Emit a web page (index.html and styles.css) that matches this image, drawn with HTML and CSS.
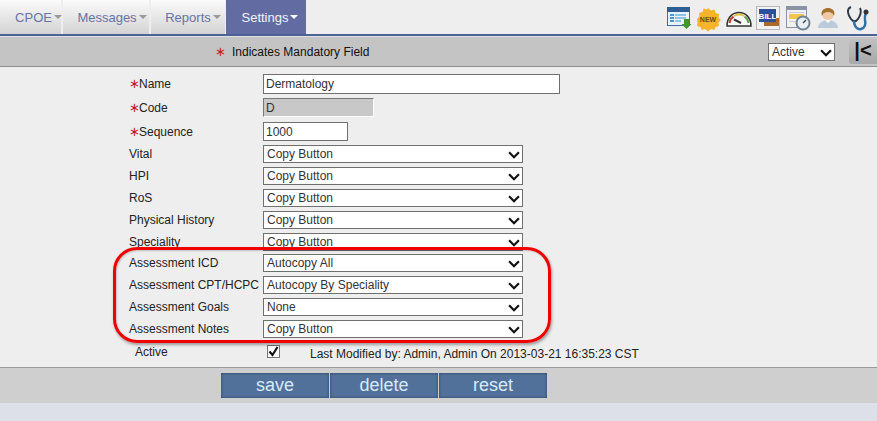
FILE: index.html
```html
<!DOCTYPE html>
<html>
<head>
<title>Settings - Speciality</title>
<meta http-equiv="Content-Type" content="text/html; charset=UTF-8" />
<link rel="stylesheet" href="styles.css">
</head>

<body>

<div class="nav">
  <ul class="menu">
    <li class="m-cpoe"><a>CPOE<span class="caret"></span></a></li>
    <li class="m-messages"><a>Messages<span class="caret"></span></a></li>
    <li class="m-reports"><a>Reports<span class="caret"></span></a></li>
    <li class="m-settings"><a>Settings<span class="caret"></span></a></li>
  </ul>
  <div class="tools">
    <svg width="30" height="30" viewBox="0 0 30 30">
      <rect x="4.500" y="4.500" width="22" height="18" fill="#eaf3fb" stroke="#3b6ea5"/>
      <rect x="4" y="4" width="23" height="5" fill="#2c5f95"/>
      <path d="M7 12h4M7 15h4M7 18h4" stroke="#3f9be0" stroke-width="2"/>
      <path d="M12 12h11M12 15h11M12 18h6" stroke="#8fc3ea" stroke-width="2"/>
      <path d="M21 16h5v5h2.500l-5 5-5-5H21z" fill="#3f9a2c"/>
    </svg>
    <svg width="30" height="30" viewBox="0 0 30 30">
      <path d="M15 5l3 2.500 3.500-1 1 3.500 3.500 1-.5 3.500 2.500 2.500-2.500 2.500.5 3.500-3.500 1-1 3-3.500-1-3 2.500-3-2.500-3.500 1-1-3-3.500-1 .5-3.500L4 16l2.500-2.500L6 10l3.500-1 1-3.500 3.500 1z" fill="#f7b32b"/>
      <text x="15" y="19" class="new">NEW</text>
    </svg>
    <svg width="30" height="30" viewBox="0 0 30 30">
      <path d="M4 23c0-18 24-18 24 0z" fill="#f8f8f8" stroke="#333" stroke-width="1.500"/>
      <path d="M6.500 20a10 10 0 0 1 4-6.500" fill="none" stroke="#cc3a2a" stroke-width="2"/>
      <path d="M11 13a10 10 0 0 1 10 0" fill="none" stroke="#e5c13a" stroke-width="2"/>
      <path d="M21.500 13.500a10 10 0 0 1 4 6.500" fill="none" stroke="#5aa04a" stroke-width="2"/>
      <path d="M11 16.500l7 3.500" stroke="#333" stroke-width="2"/>
    </svg>
    <svg width="30" height="30" viewBox="0 0 30 30">
      <rect x="3.500" y="3.500" width="23" height="23" fill="#f2f2f2" stroke="#b9b9b9"/>
      <rect x="11" y="15" width="15" height="8" fill="#a86a2c"/>
      <rect x="6" y="6" width="17" height="13" fill="#2c4f9a"/>
      <text x="14.500" y="16" class="bill">BILL</text>
    </svg>
    <svg width="30" height="30" viewBox="0 0 30 30">
      <rect x="3.500" y="3.500" width="20" height="21" fill="#f1f1ee" stroke="#8a93a5"/>
      <rect x="3" y="3" width="21" height="4" fill="#8a93a5"/>
      <rect x="6" y="11" width="15" height="5" fill="#f2c84b"/>
      <path d="M6 9.500h15M6 18.500h10" stroke="#ccd" stroke-width="1"/>
      <circle cx="20" cy="20" r="6.500" fill="#e9eef2" stroke="#6f8494" stroke-width="2"/>
      <path d="M20 20l3-3" stroke="#445" stroke-width="1.500"/>
    </svg>
    <svg width="30" height="30" viewBox="0 0 30 30">
      <path d="M5 25c0-5 5-8 10-8s10 3 10 8z" fill="#bccbdc"/>
      <path d="M12 17l3 3 3-3z" fill="#fff"/>
      <circle cx="15" cy="11" r="6" fill="#eec9a4"/>
      <path d="M9 13C7 7 12 5 15 5s8 2 6 8c-1-3-3-4-6-4s-5 1-6 4z" fill="#a5712f"/>
    </svg>
    <svg width="30" height="30" viewBox="0 0 30 30">
      <path d="M8 4C3 6 5 12 8 16c2 3 5 3 7 0 2-3 4-7 2-11" fill="none" stroke="#2f3a46" stroke-width="2"/>
      <path d="M11 18c0 5 3 9 7 8s5-5 4-9c-.5-3 0-5 1-7" fill="none" stroke="#2f6fa5" stroke-width="2.500"/>
      <circle cx="23" cy="9" r="2.500" fill="#333"/>
    </svg>
  </div>
</div>

<div class="bar">
  <div class="legend"><span class="star">∗</span>Indicates Mandatory Field</div>
  <div class="select-wrap status">
    <select><option>Active</option></select>
    <svg class="chev" viewBox="0 0 11 7"><path d="M1 1l4.500 4.500L10 1" fill="none" stroke="#111" stroke-width="2"/></svg>
  </div>
  <a class="collapse">|&lt;</a>
</div>

<div class="content">
  <form class="fields">
    <label class="req"><span class="star">∗</span>Name</label>
    <input class="txt name" type="text" value="Dermatology">

    <label class="req"><span class="star">∗</span>Code</label>
    <input class="txt code" type="text" value="D" readonly>

    <label class="req"><span class="star">∗</span>Sequence</label>
    <input class="txt seq" type="text" value="1000">

    <label>Vital</label>
    <div class="select-wrap"><select><option>Copy Button</option></select><svg class="chev" viewBox="0 0 11 7"><path d="M1 1l4.500 4.500L10 1" fill="none" stroke="#111" stroke-width="2"/></svg></div>

    <label>HPI</label>
    <div class="select-wrap"><select><option>Copy Button</option></select><svg class="chev" viewBox="0 0 11 7"><path d="M1 1l4.500 4.500L10 1" fill="none" stroke="#111" stroke-width="2"/></svg></div>

    <label>RoS</label>
    <div class="select-wrap"><select><option>Copy Button</option></select><svg class="chev" viewBox="0 0 11 7"><path d="M1 1l4.500 4.500L10 1" fill="none" stroke="#111" stroke-width="2"/></svg></div>

    <label>Physical History</label>
    <div class="select-wrap"><select><option>Copy Button</option></select><svg class="chev" viewBox="0 0 11 7"><path d="M1 1l4.500 4.500L10 1" fill="none" stroke="#111" stroke-width="2"/></svg></div>

    <label>Speciality</label>
    <div class="select-wrap"><select><option>Copy Button</option></select><svg class="chev" viewBox="0 0 11 7"><path d="M1 1l4.500 4.500L10 1" fill="none" stroke="#111" stroke-width="2"/></svg></div>

    <label>Assessment ICD</label>
    <div class="select-wrap"><select><option>Autocopy All</option></select><svg class="chev" viewBox="0 0 11 7"><path d="M1 1l4.500 4.500L10 1" fill="none" stroke="#111" stroke-width="2"/></svg></div>

    <label>Assessment CPT/HCPC</label>
    <div class="select-wrap"><select><option>Autocopy By Speciality</option></select><svg class="chev" viewBox="0 0 11 7"><path d="M1 1l4.500 4.500L10 1" fill="none" stroke="#111" stroke-width="2"/></svg></div>

    <label>Assessment Goals</label>
    <div class="select-wrap"><select><option>None</option></select><svg class="chev" viewBox="0 0 11 7"><path d="M1 1l4.500 4.500L10 1" fill="none" stroke="#111" stroke-width="2"/></svg></div>

    <label>Assessment Notes</label>
    <div class="select-wrap"><select><option>Copy Button</option></select><svg class="chev" viewBox="0 0 11 7"><path d="M1 1l4.500 4.500L10 1" fill="none" stroke="#111" stroke-width="2"/></svg></div>
  </form>

  <div class="active-row">
    <span class="active-label">Active</span>
    <span class="check">
      <svg width="13" height="13" viewBox="0 0 13 13"><path d="M2.500 6.500l3 3.500 5-8" fill="none" stroke="#111" stroke-width="2.200"/></svg>
    </span>
    <span class="modified">Last Modified by: Admin, Admin On 2013-03-21 16:35:23 CST</span>
  </div>

  <div class="callout"></div>
</div>

<div class="foot">
  <a class="btn">save</a><a class="btn">delete</a><a class="btn">reset</a>
</div>

</body>
</html>
```

FILE: styles.css
```css
html, body { margin: 0; padding: 0; }
body {
  width: 877px;
  height: 421px;
  overflow: hidden;
  background: #dde0e8;
  font-family: "Liberation Sans", Arial, sans-serif;
  font-size: 12px;
  color: #222;
}

.nav {
  display: flex;
  justify-content: space-between;
  height: 34px;
  background: #eeeeee;
  border-bottom: 2px solid #4d6391;
}
.menu {
  display: flex;
  list-style-type: none;
  margin: 0;
  padding: 0;
  font-size: 13px;
}
.menu li { margin-right: 2px; }
.menu a {
  display: flex;
  align-items: center;
  justify-content: center;
  box-sizing: border-box;
  height: 34px;
  color: #6a72a8;
  background: linear-gradient(#fbfbfb, #d3d3d3);
}
.m-cpoe a { width: 61px; padding-left: 16px; }
.m-messages a { width: 86px; padding-left: 12px; }
.m-reports a { width: 74px; padding-left: 10px; }
.menu .m-reports { margin-right: 1px; }
.menu .m-settings a {
  width: 80px;
  padding-left: 8px;
  color: #f2f2f8;
  background: #636ba3;
}
.caret {
  width: 0;
  height: 0;
  margin-left: 2px;
  margin-top: -1px;
  border-left: 4px solid transparent;
  border-right: 4px solid transparent;
  border-top: 4px solid #999;
}
.m-settings .caret { border-top-color: #fff; }

.tools {
  display: flex;
  flex: none;
  width: 214px;
  padding-top: 3px;
}
.tools svg { flex: none; }
.new {
  font-size: 7px;
  font-weight: bold;
  fill: #6d4a10;
  text-anchor: middle;
}
.bill {
  font-size: 8px;
  font-weight: bold;
  fill: #fff;
  text-anchor: middle;
}

.bar {
  display: flex;
  align-items: center;
  height: 29px;
  margin-top: 1px;
  background: #c4c4c4;
  border-bottom: 1px solid #8f8f8f;
}
.legend {
  flex: none;
  width: 553px;
  margin-left: 215px;
  color: #111;
}
.legend .star { margin-right: 10px; }
.star {
  display: inline-block;
  width: 7px;
  color: #c8201c;
  font-family: "DejaVu Sans", sans-serif;
  font-size: 13px;
  line-height: 10px;
  text-align: center;
}
.select-wrap.status {
  flex: none;
  align-self: center;
  width: 67px;
  height: 18px;
}
.collapse {
  display: block;
  flex: none;
  width: 28px;
  height: 25px;
  margin-left: 14px;
  background: linear-gradient(#c0c0c0, #a8a8a8);
  border-radius: 3px 0 0 3px;
  font-size: 20px;
  font-weight: bold;
  line-height: 23px;
  text-align: center;
  color: #111;
}

.content {
  position: relative;
  height: 300px;
  background: #eeeeee;
  border-bottom: 1px solid #999;
}
.fields {
  display: grid;
  grid-template-columns: 134px 297px;
  grid-template-rows: 20px 20px 19px 18px 18px 18px 18px 17px 18px 18px 18px 18px;
  row-gap: 4px;
  align-items: center;
  justify-items: start;
  margin: 0;
  padding: 7px 0 0 129px;
}
.fields label { white-space: nowrap; color: #222; }
.req .star { margin-right: 3px; }
.txt {
  box-sizing: border-box;
  align-self: start;
  margin: 0;
  padding: 0 0 0 2px;
  font: 12px "Liberation Sans", Arial, sans-serif;
  color: #333;
  background: #fff;
  border: 1px solid #707070;
  border-radius: 0;
  outline: none;
}
.name { width: 297px; height: 20px; }
.code {
  width: 111px;
  height: 19px;
  background: #c8c8c8;
  border: 1px solid #fff;
  border-top-color: #777;
  border-left-color: #777;
}
.seq { width: 85px; height: 19px; }
.select-wrap {
  position: relative;
  align-self: start;
  width: 260px;
  height: 18px;
}
.select-wrap select {
  appearance: none;
  -webkit-appearance: none;
  display: block;
  box-sizing: border-box;
  width: 100%;
  height: 100%;
  margin: 0;
  padding: 0 0 0 3px;
  font: 12px "Liberation Sans", Arial, sans-serif;
  color: #333;
  background: #fff;
  border: 1px solid #707070;
  border-radius: 0;
  outline: none;
}
.chev {
  position: absolute;
  right: 3px;
  top: 6px;
  width: 12px;
  height: 8px;
  pointer-events: none;
}

.active-row {
  display: flex;
  align-items: flex-start;
  padding: 7px 0 0 135px;
}
.active-label { width: 132px; margin-top: 0; }
.check {
  display: block;
  box-sizing: border-box;
  width: 13px;
  height: 13px;
  background: #fff;
  border: 1px solid #777;
}
.check svg { display: block; margin: -1px; }
.modified { margin-left: 30px; margin-top: 2px; }

.callout {
  position: absolute;
  left: 113px;
  top: 180px;
  width: 432px;
  height: 90px;
  border: 3px solid #f00000;
  border-radius: 24px;
  box-shadow: 1px 2px 3px rgba(0, 0, 0, 0.35), inset 1px 1px 2px rgba(0, 0, 0, 0.2);
  pointer-events: none;
}

.foot {
  display: flex;
  height: 35px;
  padding: 5px 0 0 221px;
  box-sizing: border-box;
  background: #cfcfcf;
}
.btn {
  display: block;
  box-sizing: border-box;
  width: 108px;
  height: 25px;
  margin-right: 1px;
  background: #52719a;
  box-shadow: inset 0 0 3px rgba(20, 40, 70, 0.7);
  color: #d6eafa;
  font-size: 18px;
  line-height: 24px;
  text-align: center;
}
```
